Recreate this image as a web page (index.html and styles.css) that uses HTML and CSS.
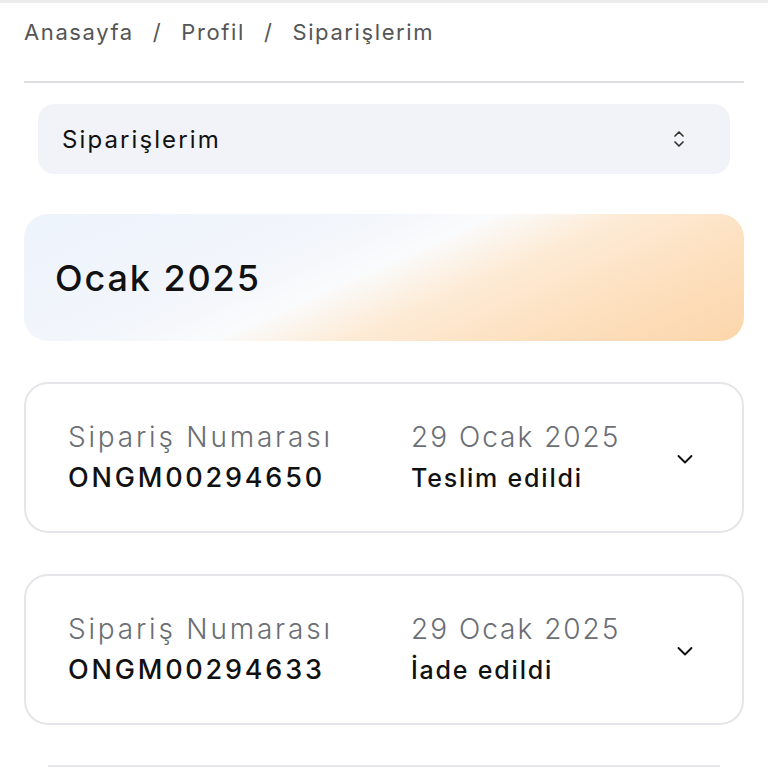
FILE: index.html
```html
<!DOCTYPE html>
<html lang="tr">
<head>
    <meta charset="UTF-8">
    <meta name="viewport" content="width=device-width, initial-scale=1.0">
    <title>Siparişlerim</title>
    <link rel="stylesheet" href="styles.css">
</head>
<body>
    <div class="topbar"></div>
    <div class="page">
        <nav class="crumbs">
            <a href="#">Anasayfa</a>
            <span class="sep">/</span>
            <a href="#">Profil</a>
            <span class="sep">/</span>
            <span>Siparişlerim</span>
        </nav>

        <div class="picker">
            <span>Siparişlerim</span>
            <svg width="16" height="22" viewBox="0 0 16 22" fill="none" stroke="#333" stroke-width="1.7" stroke-linecap="round" stroke-linejoin="round">
                <path d="M4 8l4-4 4 4" />
                <path d="M4 14l4 4 4-4" />
            </svg>
        </div>

        <div class="month">
            <h2>Ocak 2025</h2>
        </div>

        <div class="order">
            <div class="col">
                <span class="label">Sipariş Numarası</span>
                <span class="value">ONGM00294650</span>
            </div>
            <div class="col col-date">
                <span class="label date">29 Ocak 2025</span>
                <span class="status">Teslim edildi</span>
            </div>
            <svg class="arrow" width="22" height="22" viewBox="0 0 22 22" fill="none" stroke="#111" stroke-width="1.9" stroke-linecap="round" stroke-linejoin="round">
                <path d="M4.5 8l6.5 6.5 6.5-6.5" />
            </svg>
        </div>

        <div class="order">
            <div class="col">
                <span class="label">Sipariş Numarası</span>
                <span class="value">ONGM00294633</span>
            </div>
            <div class="col col-date">
                <span class="label date">29 Ocak 2025</span>
                <span class="status">İade edildi</span>
            </div>
            <svg class="arrow" width="22" height="22" viewBox="0 0 22 22" fill="none" stroke="#111" stroke-width="1.9" stroke-linecap="round" stroke-linejoin="round">
                <path d="M4.5 8l6.5 6.5 6.5-6.5" />
            </svg>
        </div>

        <div class="next"></div>
    </div>
</body>
</html>
```

FILE: styles.css
```css
body {
    margin: 0;
    background: #fff;
    font-family: "Inter", "Noto Sans", sans-serif;
    color: #111;
    overflow: hidden;
}

.topbar {
    height: 3px;
    background: #ececec;
}

.page {
    padding: 0 24px;
}

/* ust gezinme yolu */
.crumbs {
    display: flex;
    align-items: center;
    gap: 19px;
    height: 58px;
    font-size: 22px;
    letter-spacing: 1.6px;
    color: #555;
    border-bottom: 2px solid #dcdee1;
    padding-bottom: 20px;
}

.crumbs a {
    color: #555;
    text-decoration: none;
}

.picker {
    display: flex;
    align-items: center;
    justify-content: space-between;
    margin: 21px 14px 0;
    height: 70px;
    padding: 0 43px 0 24px;
    background: #f1f3f8;
    border-radius: 16px;
    font-size: 24px;
    letter-spacing: 2.1px;
}

.month {
    margin-top: 40px;
    height: 127px;
    display: flex;
    align-items: center;
    padding: 0 31px;
    border-radius: 24px;
    background: linear-gradient(156deg, #edf3fc 0%, #f3f6fb 36%, #fafbfc 47%, #fdebd6 60%, #fde0bf 78%, #fcd6ab 100%);
}

.month h2 {
    margin: 0;
    font-size: 36px;
    font-weight: 500;
    letter-spacing: 1.9px;
}

/* siparis kartlari */
.order {
    box-sizing: border-box;
    display: flex;
    align-items: center;
    margin-top: 41px;
    height: 151px;
    padding: 0 46px 0 42px;
    border: 2px solid #e4e6ea;
    border-radius: 24px;
}

.col {
    display: flex;
    flex-direction: column;
    gap: 7px;
    width: 343px;
}

.col-date {
    flex: 1;
}

.arrow {
    margin-top: 3px;
}

.label {
    font-size: 28px;
    line-height: 34px;
    color: #6b6e75;
    font-weight: 300;
    letter-spacing: 2.8px;
}

.label.date {
    letter-spacing: 2px;
}

.value {
    font-size: 27px;
    line-height: 34px;
    font-weight: 500;
    letter-spacing: 2.8px;
}

.status {
    font-size: 25px;
    line-height: 34px;
    font-weight: 500;
    letter-spacing: 1.8px;
}

.next {
    margin: 40px 24px 0;
    border-top: 2px solid #e4e6ea;
    height: 20px;
}
```
